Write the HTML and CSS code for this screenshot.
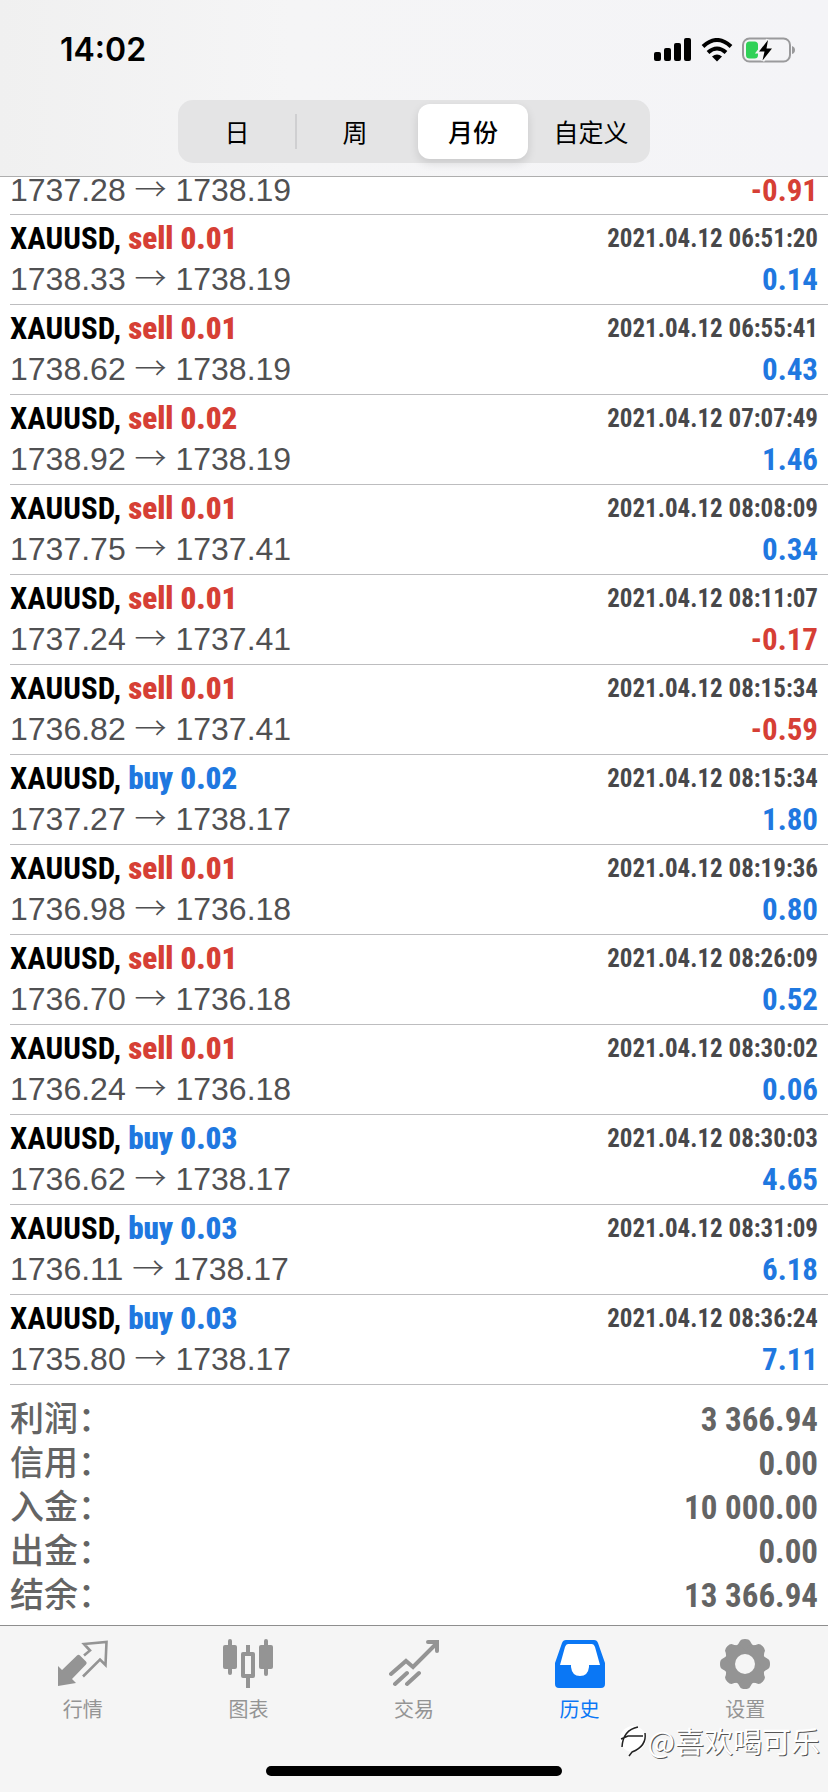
FILE: index.html
```html
<!DOCTYPE html>
<html lang="zh-CN">
<head>
<meta charset="utf-8">
<meta name="viewport" content="width=device-width, initial-scale=1">
<title>历史</title>
<link rel="stylesheet" href="styles.css">
</head>
<body>
<div class="app">
  <header class="header">
    <div class="status">
      <span class="time">14:02</span>
      <div class="status-icons">
        <svg width="38" height="24" viewBox="0 0 38 24" aria-hidden="true"><rect x="0" y="14" width="7" height="9" rx="2"/><rect x="10" y="10" width="7" height="13" rx="2"/><rect x="20" y="5" width="7" height="18" rx="2"/><rect x="30" y="0" width="7" height="23" rx="2"/></svg>
        <svg width="32" height="24" viewBox="0 0 32 24" aria-hidden="true"><g fill="none" stroke="#000" stroke-width="4"><path d="M2 8.500Q16 -4.500 30 8.500"/><path d="M7 14.500Q16 6.500 25 14.500"/></g><path d="M16 23.500L11 18.500Q16 14.500 21 18.500Z"/></svg>
        <svg width="54" height="26" viewBox="0 0 54 26" aria-hidden="true"><rect x="1" y="1.500" width="47" height="23" rx="6.500" fill="none" stroke="#9a9a9c" stroke-width="2"/><rect x="4" y="4.500" width="12" height="17" rx="3.500" fill="#30d158"/><path d="M50 9Q53 10 53 13T50 17Z" fill="#9a9a9c"/><path d="M26 3L17 14.500H22.500L20.500 23.500L30 11.500H24.500Z" fill="#000" stroke="#f5f5f6" stroke-width="4" paint-order="stroke"/></svg>
      </div>
    </div>
    <div class="segments" role="group" aria-label="期间">
      <button class="segment" type="button">日</button>
      <button class="segment divided" type="button">周</button>
      <button class="segment selected" type="button" aria-pressed="true">月份</button>
      <button class="segment" type="button">自定义</button>
    </div>
  </header>
  <main class="history">
    <ul class="deals">
      <li class="deal"><div class="line"><span class="prices">1737.28 <span class="arrow">→</span> 1738.19</span><span class="profit loss">-0.91</span></div></li>
      <li class="deal"><div class="line"><span class="symbol">XAUUSD, <b class="sell">sell 0.01</b></span><time class="date">2021.04.12 06:51:20</time></div><div class="line"><span class="prices">1738.33 <span class="arrow">→</span> 1738.19</span><span class="profit">0.14</span></div></li>
      <li class="deal"><div class="line"><span class="symbol">XAUUSD, <b class="sell">sell 0.01</b></span><time class="date">2021.04.12 06:55:41</time></div><div class="line"><span class="prices">1738.62 <span class="arrow">→</span> 1738.19</span><span class="profit">0.43</span></div></li>
      <li class="deal"><div class="line"><span class="symbol">XAUUSD, <b class="sell">sell 0.02</b></span><time class="date">2021.04.12 07:07:49</time></div><div class="line"><span class="prices">1738.92 <span class="arrow">→</span> 1738.19</span><span class="profit">1.46</span></div></li>
      <li class="deal"><div class="line"><span class="symbol">XAUUSD, <b class="sell">sell 0.01</b></span><time class="date">2021.04.12 08:08:09</time></div><div class="line"><span class="prices">1737.75 <span class="arrow">→</span> 1737.41</span><span class="profit">0.34</span></div></li>
      <li class="deal"><div class="line"><span class="symbol">XAUUSD, <b class="sell">sell 0.01</b></span><time class="date">2021.04.12 08:11:07</time></div><div class="line"><span class="prices">1737.24 <span class="arrow">→</span> 1737.41</span><span class="profit loss">-0.17</span></div></li>
      <li class="deal"><div class="line"><span class="symbol">XAUUSD, <b class="sell">sell 0.01</b></span><time class="date">2021.04.12 08:15:34</time></div><div class="line"><span class="prices">1736.82 <span class="arrow">→</span> 1737.41</span><span class="profit loss">-0.59</span></div></li>
      <li class="deal"><div class="line"><span class="symbol">XAUUSD, <b class="buy">buy 0.02</b></span><time class="date">2021.04.12 08:15:34</time></div><div class="line"><span class="prices">1737.27 <span class="arrow">→</span> 1738.17</span><span class="profit">1.80</span></div></li>
      <li class="deal"><div class="line"><span class="symbol">XAUUSD, <b class="sell">sell 0.01</b></span><time class="date">2021.04.12 08:19:36</time></div><div class="line"><span class="prices">1736.98 <span class="arrow">→</span> 1736.18</span><span class="profit">0.80</span></div></li>
      <li class="deal"><div class="line"><span class="symbol">XAUUSD, <b class="sell">sell 0.01</b></span><time class="date">2021.04.12 08:26:09</time></div><div class="line"><span class="prices">1736.70 <span class="arrow">→</span> 1736.18</span><span class="profit">0.52</span></div></li>
      <li class="deal"><div class="line"><span class="symbol">XAUUSD, <b class="sell">sell 0.01</b></span><time class="date">2021.04.12 08:30:02</time></div><div class="line"><span class="prices">1736.24 <span class="arrow">→</span> 1736.18</span><span class="profit">0.06</span></div></li>
      <li class="deal"><div class="line"><span class="symbol">XAUUSD, <b class="buy">buy 0.03</b></span><time class="date">2021.04.12 08:30:03</time></div><div class="line"><span class="prices">1736.62 <span class="arrow">→</span> 1738.17</span><span class="profit">4.65</span></div></li>
      <li class="deal"><div class="line"><span class="symbol">XAUUSD, <b class="buy">buy 0.03</b></span><time class="date">2021.04.12 08:31:09</time></div><div class="line"><span class="prices">1736.11 <span class="arrow">→</span> 1738.17</span><span class="profit">6.18</span></div></li>
      <li class="deal"><div class="line"><span class="symbol">XAUUSD, <b class="buy">buy 0.03</b></span><time class="date">2021.04.12 08:36:24</time></div><div class="line"><span class="prices">1735.80 <span class="arrow">→</span> 1738.17</span><span class="profit">7.11</span></div></li>
    </ul>
    <dl class="summary">
      <div class="total"><dt>利润：</dt><dd>3 366.94</dd></div>
      <div class="total"><dt>信用：</dt><dd>0.00</dd></div>
      <div class="total"><dt>入金：</dt><dd>10 000.00</dd></div>
      <div class="total"><dt>出金：</dt><dd>0.00</dd></div>
      <div class="total"><dt>结余：</dt><dd>13 366.94</dd></div>
    </dl>
  </main>
  <footer class="footer">
    <nav class="tabs">
      <a class="tab" href="#quotes"><svg width="50" height="50" viewBox="0 0 50 50" aria-hidden="true"><path d="M0 27L4 31L19 16.500Q20.500 15 22 16.500L28 22.500Q29.500 24 28 25.500L14 40L18 44L0 47Z" fill="currentColor"/><path d="M26 16.500L32 11.500L26 5L48.500 3L47.500 26L42 20.500L25 37.500" fill="none" stroke="currentColor" stroke-width="2.600"/></svg><span>行情</span></a>
      <a class="tab" href="#charts"><svg width="50" height="50" viewBox="0 0 50 50" aria-hidden="true" fill="currentColor"><rect x="5" y="0" width="4" height="36" rx="2"/><rect x="0" y="6" width="14" height="24" rx="2"/><rect x="41" y="0" width="4" height="37" rx="2"/><rect x="36" y="6" width="14" height="24" rx="2"/><path d="M23 6h4v7h3q2 0 2 2v22q0 2-2 2h-3v10h-4V39h-3q-2 0-2-2V15q0-2 2-2h3zM22 17v18h6V17z" fill-rule="evenodd"/></svg><span>图表</span></a>
      <a class="tab" href="#trade"><svg width="50" height="50" viewBox="0 0 50 50" aria-hidden="true" fill="none" stroke="currentColor" stroke-width="4" stroke-linecap="round"><path d="M2 35L17 22L24 28L47 5M39 3H48V12M6 45L18 34M18 45L30 34"/></svg><span>交易</span></a>
      <a class="tab active" href="#history" aria-current="page"><svg width="50" height="50" viewBox="0 0 50 50" aria-hidden="true"><path d="M11 1H39Q42 1 43 4L50 24V45Q50 49 46 49H4Q0 49 0 45V24L7 4Q8 1 11 1Z" fill="currentColor"/><path d="M13 5H37Q39 5 40 8L45 26H34V28Q33 37 25 37T16 28V26H5L10 8Q11 5 13 5Z" fill="#fff"/></svg><span>历史</span></a>
      <a class="tab" href="#settings"><svg width="50" height="50" viewBox="0 0 50 50" aria-hidden="true"><g fill="currentColor"><circle cx="25" cy="25" r="20"/><path id="tooth" d="M15 8Q19 5 20 2Q21 0 25 0T30 2Q31 5 35 8V42Q31 45 30 48Q29 50 25 50T20 48Q19 45 15 42Z"/><use href="#tooth" transform="rotate(45 25 25)"/><use href="#tooth" transform="rotate(90 25 25)"/><use href="#tooth" transform="rotate(135 25 25)"/></g><circle cx="25" cy="25" r="10" fill="#f5f5f5"/></svg><span>设置</span></a>
    </nav>
    <div class="home"></div>
    <div class="watermark"><svg width="30" height="36" viewBox="0 0 30 36" aria-hidden="true"><circle cx="15" cy="17" r="13" fill="#fff"/><path d="M4 25Q5 8 20 5M3 17L10 14H25M27 11Q29 24 14 30L11 34" fill="none" stroke="#222" stroke-width="1.500"/></svg><span>@喜欢喝可乐</span></div>
  </footer>
</div>
</body>
</html>
```
FILE: styles.css
```css
* {
  box-sizing: border-box;
}

body {
  margin: 0;
  background: #fff;
  color: #000;
  font-family: "Liberation Sans", "Noto Sans CJK SC", sans-serif;
}

.app {
  display: flex;
  flex-direction: column;
  min-height: 100vh;
}

.header {
  display: flex;
  flex-direction: column;
  align-items: center;
  padding-bottom: 13px;
  border-bottom: 1px solid #aeaeae;
  background: linear-gradient(90deg, #f0f0f0, #f5f5f6 35%, #f4f4f7);
}

.status {
  display: flex;
  align-items: center;
  justify-content: space-between;
  align-self: stretch;
  height: 100px;
  padding: 0 32px 0 60px;
}

.time {
  font: 600 32px/40px Inter, sans-serif;
}

.status-icons {
  display: flex;
  align-items: center;
  gap: 9px;
}

.segments {
  display: grid;
  grid-template-columns: repeat(4, 1fr);
  width: 57%;
  height: 63px;
  border-radius: 15px;
  background: #e4e4e5;
}

.segment {
  position: relative;
  margin: 4px;
  padding: 0 0 2px;
  border: 0;
  border-radius: 12px;
  background: none;
  color: #000;
  font: 400 25px/36px "Noto Sans CJK SC", sans-serif;
}

.segment.selected {
  background: #fff;
  box-shadow: 0 4px 10px rgba(0, 0, 0, 0.12);
  font-weight: 500;
}

.segment.divided::before {
  content: "";
  position: absolute;
  top: 10px;
  bottom: 10px;
  left: -5px;
  width: 2px;
  background: #cfcfd1;
}

.history {
  flex: 1;
}

.deals {
  margin: 0;
  padding: 0 0 0 10px;
  list-style: none;
}

.deal {
  padding: 3px 10px 4px 0;
  border-bottom: 1px solid #bdbdbf;
}

.deal:first-child {
  padding-top: 0;
  padding-bottom: 3px;
}

.deal:first-child .line {
  height: 34px;
  align-items: flex-end;
}

.line {
  display: flex;
  align-items: center;
  justify-content: space-between;
  height: 41px;
  line-height: 41px;
}

.symbol,
.date,
.profit,
.total dd {
  font-family: "Roboto Condensed", "Liberation Sans Narrow", "Liberation Sans", sans-serif;
  font-weight: 700;
}

.symbol,
.profit {
  font-size: 31px;
}

.sell,
.loss {
  color: #d63f35;
}

.buy {
  color: #1f78e0;
}

.date {
  color: #48484a;
  font-size: 25px;
}

.prices {
  color: #505052;
  font-size: 32px;
}

.arrow {
  font-family: "Noto Sans CJK SC", sans-serif;
  font-weight: 300;
  line-height: 1;
}

.profit:not(.loss) {
  color: #1f78e0;
}

.summary {
  margin: 0;
  padding: 12px 10px 8px;
  color: #646464;
}

.total {
  display: flex;
  align-items: baseline;
  justify-content: space-between;
  height: 44px;
  line-height: 44px;
}

.total dt {
  font-size: 34px;
  font-weight: 500;
}

.total dd {
  margin: 0;
  font-size: 33px;
}

.footer {
  position: relative;
  display: flex;
  flex-direction: column;
  align-items: center;
  padding-bottom: 16px;
  border-top: 1px solid #8e8e8e;
  background: #f5f5f5;
}

.tabs {
  display: grid;
  grid-template-columns: repeat(5, 1fr);
  align-self: stretch;
  height: 140px;
  padding-top: 13px;
}

.tab {
  display: flex;
  flex-direction: column;
  align-items: center;
  gap: 5px;
  color: #949494;
  font: 400 20px/30px "Noto Sans CJK SC", sans-serif;
  text-decoration: none;
}

.tab.active {
  color: #0a77f5;
}

.home {
  width: 296px;
  height: 10px;
  border-radius: 5px;
  background: #000;
}

.watermark {
  position: absolute;
  right: 8px;
  bottom: 32px;
  display: flex;
  align-items: center;
  color: #fff;
  font: 400 29px/40px "Noto Sans CJK SC", sans-serif;
  text-shadow: 1px 1px 0 #555;
}
```
